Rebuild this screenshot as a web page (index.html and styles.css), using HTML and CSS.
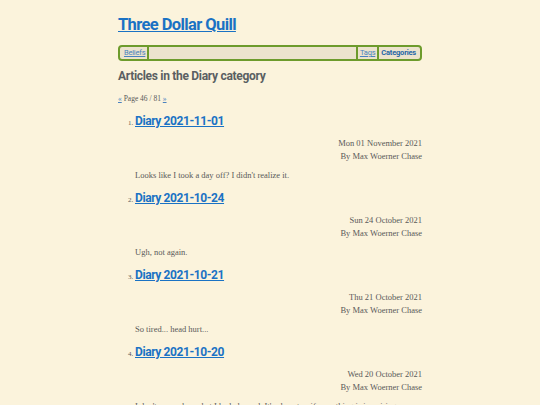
FILE: index.html
```html
<!DOCTYPE html>
<html>
<head>
<meta charset="utf-8">
<link rel="stylesheet" href="styles.css">
</head>
<body>
<div class="page">
  <header class="site-header">
    <h1 class="site-title"><a href="#">Three Dollar Quill</a></h1>
    <nav class="nav">
      <a class="nav-link" href="#">Beliefs</a>
      <span class="nav-spacer"></span>
      <a class="nav-link" href="#">Tags</a>
      <a class="nav-link active" href="#">Categories</a>
    </nav>
  </header>
  <main>
    <h2 class="page-heading">Articles in the Diary category</h2>
    <p class="pager"><a href="#">«</a> Page 46 / 81 <a href="#">»</a></p>
    <ol class="articles">
      <li class="article">
        <h3 class="article-title"><a href="#">Diary 2021-11-01</a></h3>
        <div class="meta"><div>Mon 01 November 2021</div><div>By Max Woerner Chase</div></div>
        <p class="summary">Looks like I took a day off? I didn't realize it.</p>
      </li>
      <li class="article">
        <h3 class="article-title"><a href="#">Diary 2021-10-24</a></h3>
        <div class="meta"><div>Sun 24 October 2021</div><div>By Max Woerner Chase</div></div>
        <p class="summary">Ugh, not again.</p>
      </li>
      <li class="article">
        <h3 class="article-title"><a href="#">Diary 2021-10-21</a></h3>
        <div class="meta"><div>Thu 21 October 2021</div><div>By Max Woerner Chase</div></div>
        <p class="summary">So tired... head hurt...</p>
      </li>
      <li class="article">
        <h3 class="article-title"><a href="#">Diary 2021-10-20</a></h3>
        <div class="meta"><div>Wed 20 October 2021</div><div>By Max Woerner Chase</div></div>
        <p class="summary">I don't remember what I had planned. It's almost as if something is impairing my memory.</p>
      </li>
    </ol>
  </main>
</div>
</body>
</html>
```
FILE: styles.css
```css
html, body {
  margin: 0;
  padding: 0;
  background: #fbf3dc;
}
body {
  font-family: "Liberation Serif", serif;
  color: #595959;
}
.page {
  width: 304px;
  margin: 0 auto;
  padding-top: 14px;
}
.site-title {
  margin: 0;
  font-family: Roboto, sans-serif;
  font-size: 16.5px;
  line-height: 22px;
  font-weight: 700;
  letter-spacing: -0.6px;
}
.site-title a {
  color: #1a72c4;
}
.nav {
  margin-top: 9px;
  height: 12px;
  display: flex;
  align-items: stretch;
  border: 2px solid #6d9b2c;
  border-radius: 4px;
  background: #ece3cd;
  font-family: Roboto, sans-serif;
  font-size: 7.5px;
  line-height: 12px;
  padding: 0 2px;
  letter-spacing: -0.2px;
}
.nav-link {
  color: #4a82bf;
  padding: 0 2px;
  border-right: 2px solid #6d9b2c;
}
.nav-link:last-child {
  border-right: none;
}
.nav-link.active {
  font-weight: 700;
  color: #2766a6;
  text-decoration: none;
}
.nav-spacer {
  flex: 1;
  border-right: 2px solid #6d9b2c;
}
.page-heading {
  margin: 7px 0 0;
  font-family: Roboto, sans-serif;
  font-size: 12px;
  line-height: 16px;
  font-weight: 700;
  color: #5a5f62;
  letter-spacing: -0.3px;
}
.pager {
  margin: 10px 0 0;
  font-size: 7.5px;
  line-height: 10px;
}
.pager a {
  color: #4a82bf;
}
.articles {
  margin: 9px 0 0;
  padding-left: 17px;
  font-size: 7px;
}
.article {
  margin-bottom: 8.5px;
}
.article-title {
  margin: 0;
  display: inline;
  font-family: Roboto, sans-serif;
  font-size: 12px;
  line-height: 16px;
  font-weight: 700;
  letter-spacing: -0.4px;
}
.article-title a {
  color: #1a72c4;
}
.meta {
  margin-top: 7.5px;
  text-align: right;
  font-size: 8.5px;
  line-height: 13px;
}
.summary {
  margin: 6px 0 0;
  font-size: 8.5px;
  line-height: 13px;
}
```
